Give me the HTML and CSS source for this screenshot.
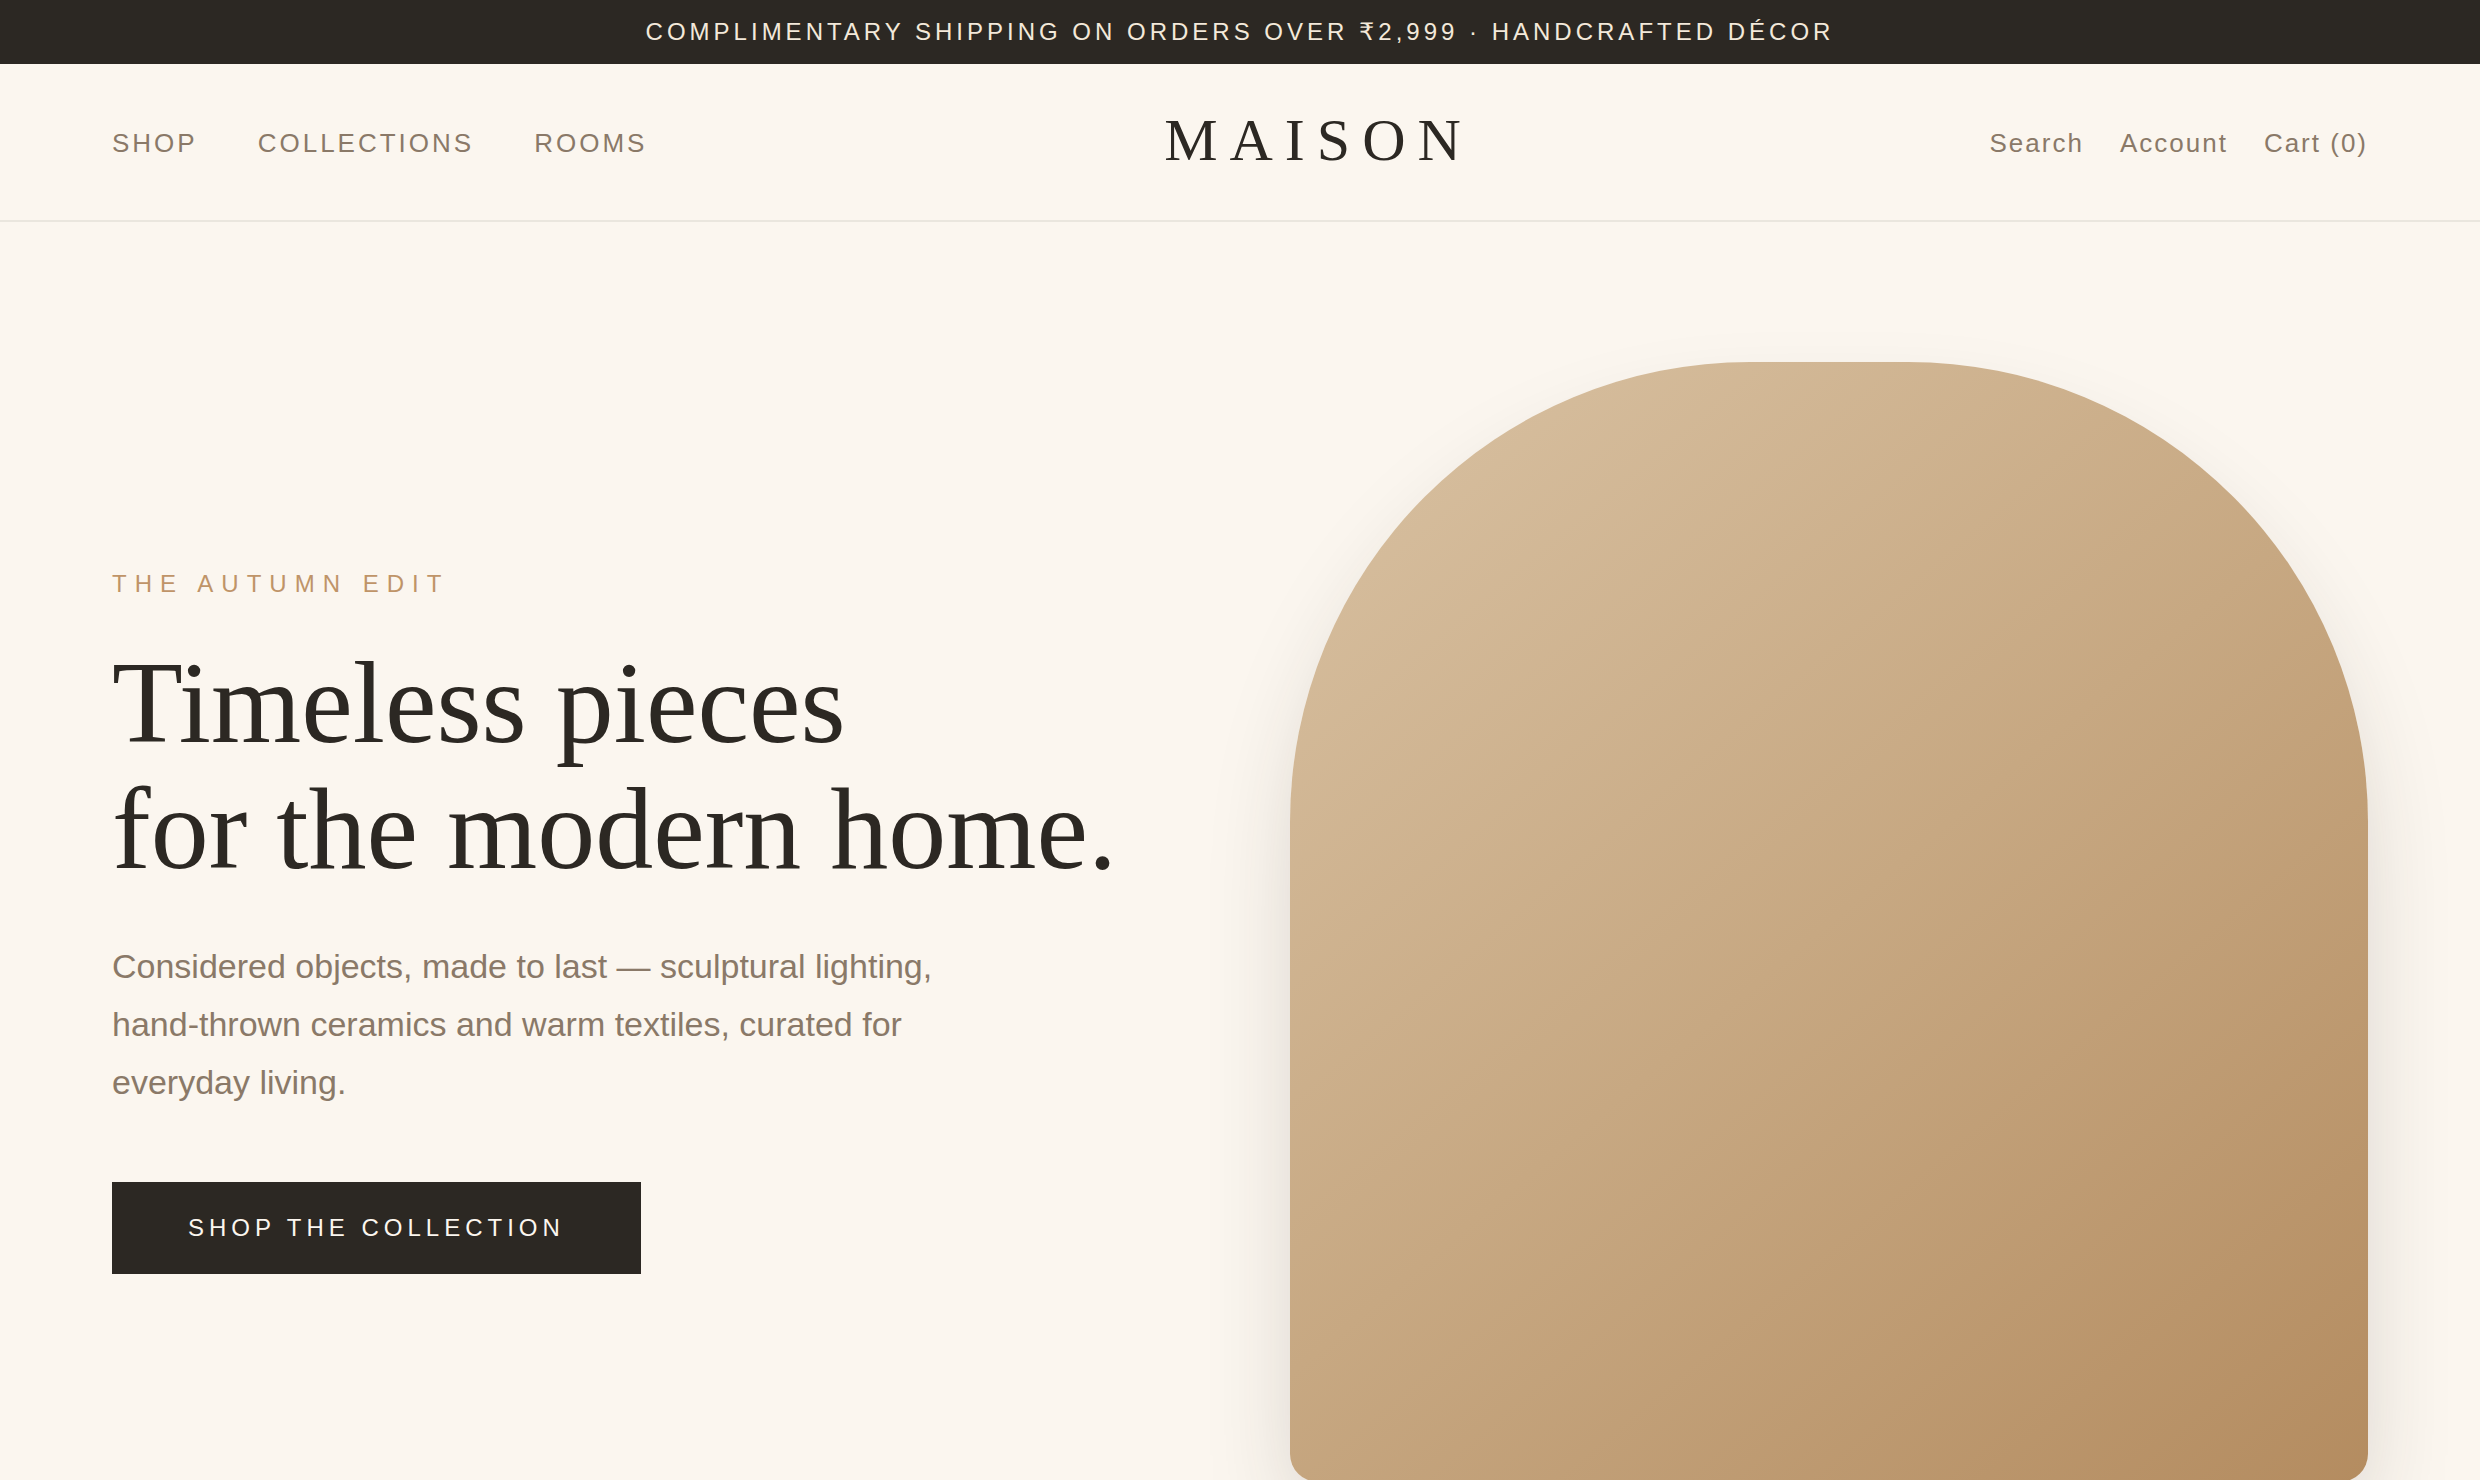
FILE: index.html
```html
<!DOCTYPE html>
<html lang="en">
<head>
  <meta charset="UTF-8">
  <meta name="viewport" content="width=device-width, initial-scale=1.0">
  <title>Maison</title>
  <link rel="stylesheet" href="styles.css">
</head>
<body>

<div class="announcement">Complimentary shipping on orders over ₹2,999 · Handcrafted décor</div>

<header class="header">
  <nav class="nav" aria-label="Main">
    <a href="#">Shop</a>
    <a href="#">Collections</a>
    <a href="#">Rooms</a>
  </nav>
  <a class="logo" href="#">MAISON</a>
  <nav class="actions" aria-label="Customer">
    <a href="#">Search</a>
    <a href="#">Account</a>
    <a href="#">Cart (0)</a>
  </nav>
</header>

<main class="hero">
  <div class="hero-text">
    <p class="eyebrow">The Autumn Edit</p>
    <h1>Timeless pieces<br>for the modern home.</h1>
    <p class="lead">Considered objects, made to last — sculptural lighting, hand-thrown ceramics and warm textiles, curated for everyday living.</p>
    <button type="button" class="shop-button">Shop the collection</button>
  </div>
  <div class="hero-arch"></div>
</main>

</body>
</html>
```
FILE: styles.css
```css
* {
  box-sizing: border-box;
}
body {
  margin: 0;
  font-family: "Liberation Sans", "DejaVu Sans", sans-serif;
  background-color: #fbf6ef;
  color: #2c2823;
}
a {
  color: inherit;
  text-decoration: none;
}
.announcement {
  padding: 18px 112px;
  background-color: #2c2823;
  color: #f3e9da;
  font-size: 24px;
  line-height: 28px;
  letter-spacing: 4px;
  text-align: center;
  text-transform: uppercase;
}

/* Header */
.header {
  display: flex;
  align-items: center;
  justify-content: space-between;
  padding: 44px 112px;
  border-bottom: 2px solid #eae6de;
}
.nav,
.actions {
  display: flex;
  padding-top: 2px;
  color: #8a7968;
  font-size: 26px;
  line-height: 30px;
}
.nav {
  gap: 60px;
  letter-spacing: 3px;
  text-transform: uppercase;
}
.actions {
  gap: 36px;
  letter-spacing: 2px;
}
.logo {
  padding-bottom: 4px;
  font-family: "Liberation Serif", "Times New Roman", serif;
  font-size: 60px;
  line-height: 64px;
  letter-spacing: 12px;
}

/* Hero */
.hero {
  display: grid;
  grid-template-columns: 1fr 1fr;
  gap: 100px;
  align-items: center;
  padding: 140px 112px;
}
.eyebrow {
  margin: 0 0 42px;
  color: #bf9468;
  font-size: 24px;
  line-height: 28px;
  letter-spacing: 8px;
  text-transform: uppercase;
}
h1 {
  margin: 0 0 45px;
  font-family: "Liberation Serif", "Times New Roman", serif;
  font-size: 116px;
  font-weight: 400;
  line-height: 126px;
}
.lead {
  max-width: 880px;
  margin: 0 0 71px;
  color: #8a7968;
  font-size: 34px;
  line-height: 58px;
}
.shop-button {
  padding: 32px 76px;
  border: 0;
  background-color: #2c2823;
  color: #fbf6ef;
  font-family: inherit;
  font-size: 24px;
  line-height: 28px;
  letter-spacing: 5px;
  text-transform: uppercase;
  cursor: pointer;
}
.hero-arch {
  height: 1120px;
  border-radius: 460px 460px 28px 28px;
  background: linear-gradient(140deg, #d9c2a3, #c7a882 50%, #b48c60);
  box-shadow: 0 50px 100px -20px rgba(44, 40, 35, 0.22);
}
```
